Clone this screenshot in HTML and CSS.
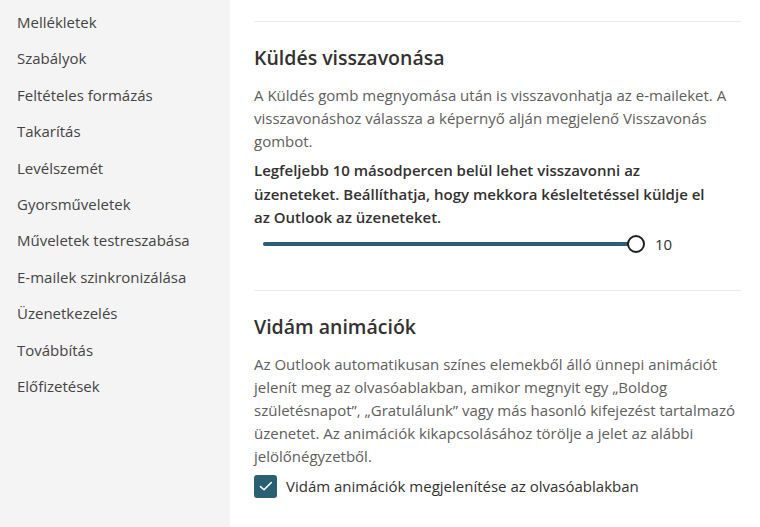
FILE: index.html
```html
<!DOCTYPE html>
<html lang="hu">
<head>
    <meta charset="UTF-8">
    <title>Beállítások</title>
    <link rel="stylesheet" href="styles.css">
</head>
<body>
    <div class="layout">
        <nav class="side-nav">
            <a href="#">Mellékletek</a>
            <a href="#">Szabályok</a>
            <a href="#">Feltételes formázás</a>
            <a href="#">Takarítás</a>
            <a href="#">Levélszemét</a>
            <a href="#">Gyorsműveletek</a>
            <a href="#">Műveletek testreszabása</a>
            <a href="#">E-mailek szinkronizálása</a>
            <a href="#">Üzenetkezelés</a>
            <a href="#">Továbbítás</a>
            <a href="#">Előfizetések</a>
        </nav>
        <main class="settings">
            <section class="setting">
                <h2>Küldés visszavonása</h2>
                <p class="desc">A Küldés gomb megnyomása után is visszavonhatja az e-maileket. A visszavonáshoz válassza a képernyő alján megjelenő Visszavonás gombot.</p>
                <p class="strong">Legfeljebb 10 másodpercen belül lehet visszavonni az üzeneteket. Beállíthatja, hogy mekkora késleltetéssel küldje el az Outlook az üzeneteket.</p>
                <div class="slider">
                    <div class="track">
                        <div class="fill" style="width: 100%"></div>
                        <span class="thumb"></span>
                    </div>
                    <span class="value">10</span>
                </div>
            </section>
            <section class="setting">
                <h2>Vidám animációk</h2>
                <p class="desc">Az Outlook automatikusan színes elemekből álló ünnepi animációt jelenít meg az olvasóablakban, amikor megnyit egy „Boldog születésnapot”, „Gratulálunk” vagy más hasonló kifejezést tartalmazó üzenetet. Az animációk kikapcsolásához törölje a jelet az alábbi jelölőnégyzetből.</p>
                <label class="check">
                    <span class="box">
                        <svg width="16" height="16" viewBox="0 0 16 16"><path d="M2.5 8.6 L6 11.8 L13.2 4.6" fill="none" stroke="#fff" stroke-width="1.5" stroke-linecap="round" stroke-linejoin="round"/></svg>
                    </span>
                    Vidám animációk megjelenítése az olvasóablakban
                </label>
            </section>
        </main>
    </div>
</body>
</html>
```

FILE: styles.css
```css
body {
    margin: 0;
    font-family: "Segoe UI", "Open Sans", sans-serif;
    font-size: 15px;
    color: #323130;
    background: #fff;
}
.layout {
    display: flex;
    height: 527px;
    overflow: hidden;
}
.side-nav {
    width: 230px;
    flex: none;
    background: #f4f4f4;
    display: flex;
    flex-direction: column;
    padding-top: 4px;
}
.side-nav a {
    color: #444;
    text-decoration: none;
    padding: 0 17px;
    line-height: 36.4px;
}
.settings {
    flex: 1;
    padding: 0 19px 0 24px;
}
.setting {
    border-top: 1px solid #edebe9;
    margin-top: 21px;
    padding-top: 22px;
}
.setting + .setting {
    margin-top: 33px;
}
.setting h2 {
    margin: 0;
    font-size: 19.5px;
    line-height: 27px;
    font-weight: 600;
    color: #323130;
}
.desc {
    margin: 13px 0 0;
    color: #605e5c;
    line-height: 23px;
}
.strong {
    margin: 6px 0 0;
    max-width: 460px;
    font-weight: 600;
    line-height: 23.5px;
}
.slider {
    display: flex;
    align-items: center;
    gap: 10px;
    margin: 1px 0 0 9px;
    height: 26px;
}
.track {
    position: relative;
    width: 373px;
    height: 4px;
    border-radius: 2px;
    background: #c8c6c4;
}
.fill {
    height: 100%;
    border-radius: 2px;
    background: #2a5f74;
}
.thumb {
    position: absolute;
    right: -9px;
    top: -7px;
    width: 14px;
    height: 14px;
    border: 2px solid #201f1e;
    border-radius: 50%;
    background: #fff;
}
.value {
    margin-left: 9px;
}
.check {
    display: flex;
    align-items: center;
    gap: 9px;
    margin-top: 7px;
    color: #323130;
}
.box {
    width: 23px;
    height: 23px;
    border-radius: 3px;
    background: #2a5f74;
    display: flex;
    align-items: center;
    justify-content: center;
}
```
